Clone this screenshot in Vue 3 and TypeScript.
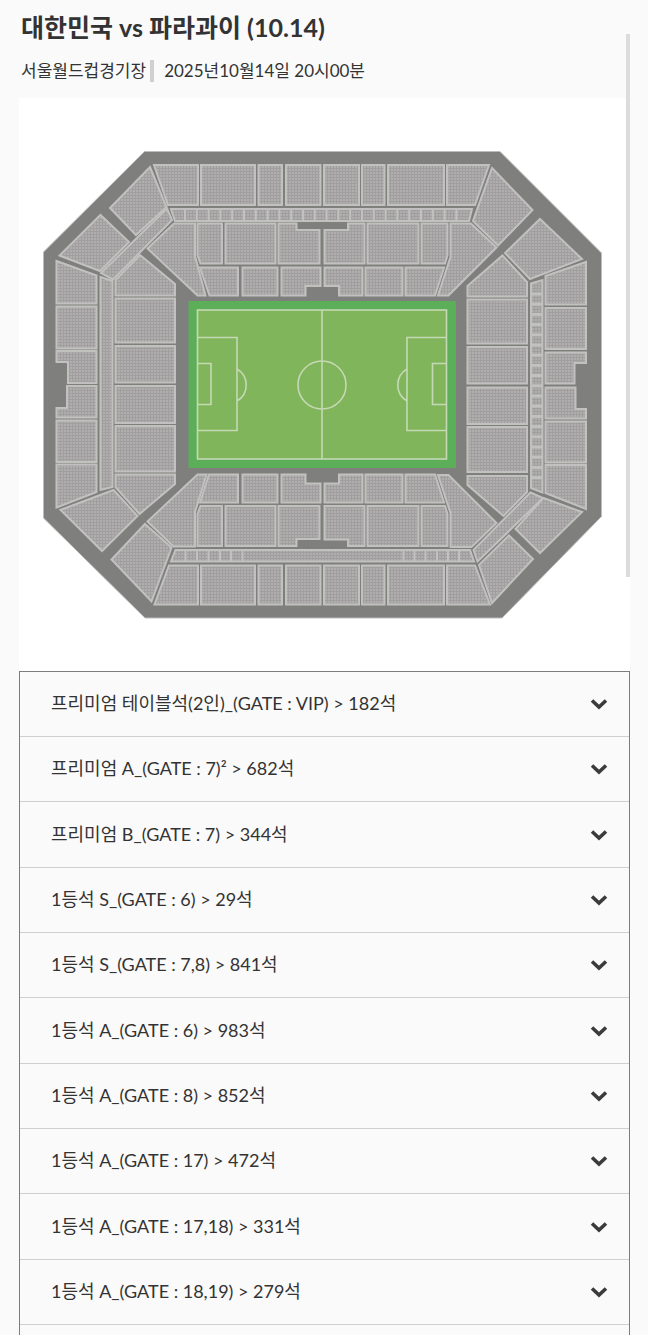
<script setup lang="ts">
import { ref } from 'vue'

interface SeatGrade {
  name: string
  seats: number
}

const grades: SeatGrade[] = [
  { name: '프리미엄 테이블석(2인)_(GATE : VIP)', seats: 182 },
  { name: '프리미엄 A_(GATE : 7)²', seats: 682 },
  { name: '프리미엄 B_(GATE : 7)', seats: 344 },
  { name: '1등석 S_(GATE : 6)', seats: 29 },
  { name: '1등석 S_(GATE : 7,8)', seats: 841 },
  { name: '1등석 A_(GATE : 6)', seats: 983 },
  { name: '1등석 A_(GATE : 8)', seats: 852 },
  { name: '1등석 A_(GATE : 17)', seats: 472 },
  { name: '1등석 A_(GATE : 17,18)', seats: 331 },
  { name: '1등석 A_(GATE : 18,19)', seats: 279 },
]

const selected = ref<string | null>(null)

function select(name: string): void {
  selected.value = selected.value === name ? null : name
}

function box(x1: number, y1: number, x2: number, y2: number): string {
  return `${x1},${y1} ${x2},${y1} ${x2},${y2} ${x1},${y2}`
}

const blocks: string[] = [
  // north upper tier
  '154,165 198,165 198,205 168,205',
  box(201, 165, 255, 205),
  box(258.5, 165, 282, 205),
  box(286, 165, 320.5, 205),
  box(324, 165, 359, 205),
  box(362, 165, 384.5, 205),
  box(388, 165, 444, 205),
  '447,165 489,165 475,205 447,205',
  '171,209 472,209 469,221 175,221',
  // north middle tier
  '197.5,223.5 222,223.5 222,263.5 200.5,263.5 197.5,255',
  box(225.5, 223.5, 275.5, 263.5),
  '278.5,223.5 296.5,223.5 296.5,230 319.5,230 319.5,263.5 278.5,263.5',
  '324.5,230 348,230 348,223.5 364.5,223.5 364.5,263.5 324.5,263.5',
  box(367.5, 223.5, 418.5, 263.5),
  '421.5,223.5 447.5,223.5 447.5,255 445,263.5 421.5,263.5',
  // north lower tier
  '200,267.5 238,267.5 238,295.5 209.5,295.5',
  box(242.5, 267.5, 277.5, 295.5),
  '281.5,267.5 320.5,267.5 320.5,286 305.5,286 305.5,295.5 281.5,295.5',
  '324.5,267.5 362.5,267.5 362.5,295.5 339,295.5 339,286 324.5,286',
  box(365.5, 267.5, 402.5, 295.5),
  '405.5,267.5 444,267.5 435,295.5 405.5,295.5',
  '174,223.5 195,223.5 195,256 205.5,295.5 197.5,295.5 147.5,248.5',
  '450.5,223.5 471,223.5 496.5,247.5 448.5,295.5 438,295.5 450.5,257',
  // north-west corner
  '150,167 166.5,207 136,235 110,208',
  '167,208.5 172,220 113,279.5 101,273',
  '100.5,215 129,242 100,271 59.5,255.5',
  '140,255 175,284 175,295.5 115.5,295.5 115.5,280',
  // north-east corner
  '492,168 532.5,210 498,245.5 473,221',
  '540,219 582,259 530,279 505,253',
  '502.5,255.5 527,282 527,296.5 467.5,296.5 467.5,286',
  // west outer tier
  '56.5,261 96.5,275.5 96.5,303.5 56.5,303.5',
  box(56.5, 306.5, 96.5, 348.5),
  '56.5,351 96.5,351 96.5,383 68,383 68,362 56.5,362',
  '67,386 96.5,386 96.5,417.5 56.5,417.5 56.5,408 67,408',
  box(56.5, 420.5, 96.5, 462),
  '56.5,464.5 96.5,464.5 96.5,492 56.5,507.5',
  '100.5,277 112.5,281 112.5,487 100.5,490',
  // west inner tier
  box(115.5, 298.5, 175, 342.5),
  box(115.5, 346, 175, 382.5),
  box(115.5, 386, 175, 423),
  box(115.5, 426, 175, 471.5),
  '115.5,474.5 175,474.5 175,484 139.5,514 115.5,487',
  // east inner tier
  box(467.5, 299.5, 527, 343.5),
  box(467.5, 347, 527, 383.5),
  box(467.5, 387.5, 527, 424),
  box(467.5, 427, 527, 472),
  '467.5,476 527,476 527,492 503.5,516 467.5,485',
  // east outer tier
  '531,283.5 542.5,280 542.5,492.5 531,488',
  '545.5,276 586,262 586,304.5 545.5,304.5',
  box(545.5, 308, 586, 349),
  '545.5,352.5 586,352.5 586,363 574.5,363 574.5,383.5 545.5,383.5',
  '545.5,387.5 575.5,387.5 575.5,409 586,409 586,418.5 545.5,418.5',
  box(545.5, 421.5, 586, 462.5),
  '545.5,465 586,465 586,509 545.5,493',
  // south-east corner
  '543.5,498 582,512 540,553 515.5,529',
  '530.5,492.5 543,498 477.5,561.5 473.5,550',
  '509,535.5 533,559 492,603 479,565',
  // south-west corner
  '113.5,490 137.5,516 102,551 60.5,510',
  '145,524 171.5,547.5 151.5,601.5 111.5,559.5',
  // south lower tier
  '197.5,474.5 206.5,474.5 195,512 195,546.5 173.5,546.5 147.5,521.5',
  '438,475 448.5,475 496.5,523 471.5,547 450.5,547 450.5,513',
  '209,474.5 238,474.5 238,502.5 200,502.5',
  box(242.5, 474.5, 277.5, 502.5),
  '281.5,474.5 305.5,474.5 305.5,483.5 320.5,483.5 320.5,502.5 281.5,502.5',
  '324.5,483.5 339,483.5 339,474.5 362.5,474.5 362.5,502.5 324.5,502.5',
  box(365.5, 474.5, 402.5, 502.5),
  '405.5,474.5 435,474.5 444,502.5 405.5,502.5',
  // south middle tier
  '200.5,506 222,506 222,546 197.5,546 197.5,514',
  box(225.5, 506, 275.5, 546),
  '278.5,506 319.5,506 319.5,539 296.5,539 296.5,546 278.5,546',
  '324.5,506 364.5,506 364.5,546 348,546 348,539.5 324.5,539.5',
  box(367.5, 506, 418.5, 546),
  '421.5,506 445,506 447.5,514 447.5,546 421.5,546',
  '175.5,550 470,550 474,561.5 171,561.5',
  // south upper tier
  '169,565.5 198,565.5 198,604.5 154.5,604.5',
  box(201, 565.5, 255, 604.5),
  box(258.5, 565.5, 282, 604.5),
  box(286, 565.5, 320.5, 604.5),
  box(324, 565.5, 359, 604.5),
  box(362, 565.5, 384.5, 604.5),
  box(388, 565.5, 444, 604.5),
  '447,565.5 475,565.5 490,604.5 447,604.5',
]

const northDividers = Array.from({ length: 24 }, (_, i) => 185 + i * 11.8)
const southDividers = [185.5, 197, 208.5, 220, 231, 242.5, 403.5, 414.5, 425.5, 437, 448, 459]
const eastDividers = Array.from({ length: 19 }, (_, i) => 294 + i * 10.2)
</script>

<template>
  <main class="page">
    <header class="head">
      <h1 class="title">대한민국 vs 파라과이 (10.14)</h1>
      <p class="meta">
        <span class="venue">서울월드컵경기장</span>
        <time datetime="2025-10-14T20:00">2025년10월14일 20시00분</time>
      </p>
    </header>

    <section class="map">
      <svg class="stadium" viewBox="19 98 611 573" role="img" aria-label="서울월드컵경기장">
        <defs>
          <pattern id="seats" width="3" height="3" patternUnits="userSpaceOnUse">
            <rect width="3" height="3" fill="#b0aeae" />
            <path d="M0 .5H3M.5 0V3" stroke="#a09e9e" stroke-width="1" />
          </pattern>
        </defs>
        <polygon
          points="144.5,151.5 500,151.5 601.5,253 601.5,516.5 502,618 145,618 43.5,518 43.5,252"
          fill="#7f7f7e"
          stroke="#bdbdbc"
          stroke-width="1"
        />
        <g fill="url(#seats)" stroke="#c1c1c0" stroke-width="2">
          <polygon v-for="(points, i) in blocks" :key="i" :points="points" />
        </g>
        <g stroke="#c1c1c0" stroke-width="2">
          <line v-for="x in northDividers" :key="`n${x}`" :x1="x" :x2="x" y1="209" y2="221" />
          <line v-for="x in southDividers" :key="`s${x}`" :x1="x" :x2="x" y1="550" y2="561" />
          <line v-for="y in eastDividers" :key="`e${y}`" x1="531" x2="542" :y1="y" :y2="y" stroke-width="3" />
        </g>
        <rect x="188.5" y="301" width="267.5" height="167" fill="#5dae59" />
        <rect x="197.5" y="310" width="249" height="149" fill="#80b55b" />
        <g fill="none" stroke="#c5d9b5" stroke-width="1.6">
          <rect x="197.5" y="310" width="249" height="149" />
          <path d="M322 310V459" />
          <circle cx="322" cy="385" r="24" />
          <path d="M197.5 337.5H237V430.5H197.5M197.5 363.5H211V404.5H197.5M237 369A18.5 18.5 0 0 1 237 401" />
          <path d="M446.5 337.5H407V430.5H446.5M446.5 363.5H432.5V404.5H446.5M407 369A18.5 18.5 0 0 0 407 401" />
        </g>
      </svg>
    </section>

    <ul class="grades">
      <li v-for="grade in grades" :key="grade.name" class="grade">
        <button
          type="button"
          class="grade-button"
          :aria-pressed="selected === grade.name"
          @click="select(grade.name)"
        >
          <span class="grade-label">{{ grade.name }} &gt; {{ grade.seats }}석</span>
          <svg class="chevron" viewBox="0 0 18 12" aria-hidden="true">
            <path d="M2 2.5 9 9 16 2.5" fill="none" stroke="#3b3b3b" stroke-width="3.6" />
          </svg>
        </button>
      </li>
    </ul>

    <div class="scroll-thumb" aria-hidden="true"></div>
  </main>
</template>

<style>
body {
  background: #fafafa;
}
</style>

<style scoped>
.page {
  position: relative;
  display: flex;
  flex-direction: column;
  box-sizing: border-box;
  height: 100vh;
  padding: 0 18px 0 19px;
  overflow: hidden;
  background: #fafafa;
  color: #333;
  font-family: Lato, "Noto Sans CJK KR", sans-serif;
  font-size: 17px;
}

.head {
  padding: 10px 2px 14px;
}

.title {
  margin: 0;
  font-size: 25px;
  font-weight: 700;
  line-height: 34px;
}

.meta {
  display: flex;
  align-items: center;
  margin: 14px 0 0;
  line-height: 26px;
}

.venue {
  margin-right: 10px;
  padding-right: 4px;
  border-right: 4px solid #d0d0d0;
  line-height: 22px;
}

.map {
  background: #fff;
}

.stadium {
  display: block;
  width: 100%;
}

.grades {
  flex: 1;
  margin: 0;
  padding: 0;
  border: 1px solid #7c7c7c;
  border-bottom: 0;
  list-style: none;
}

.grade {
  display: flex;
  box-sizing: border-box;
  height: 65px;
  border-bottom: 1px solid #cfcfcf;
}

.grade:nth-child(3n) {
  height: 66px;
}

.grade-button {
  display: flex;
  flex: 1;
  align-items: center;
  justify-content: space-between;
  padding: 0 21px 0 31px;
  border: 0;
  background: transparent;
  color: inherit;
  font: inherit;
  font-size: 18px;
  text-align: left;
  cursor: pointer;
}

.grade-label {
  padding-bottom: 4px;
}

.chevron {
  width: 18px;
  height: 12px;
}

.scroll-thumb {
  position: absolute;
  top: 34px;
  right: 18px;
  width: 4px;
  height: 543px;
  background: #dcdcdc;
}
</style>
